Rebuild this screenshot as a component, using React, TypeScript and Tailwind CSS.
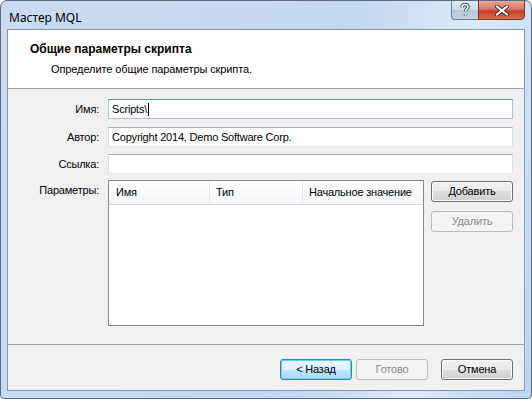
const FONT = { fontFamily: '"Liberation Sans", Arial, sans-serif' }

type BtnKind = "normal" | "default" | "disabled"

function WinButton({ label, kind = "normal", w = "w-[72px]" }: { label: string; kind?: BtnKind; w?: string }) {
  const styles: Record<BtnKind, string> = {
    normal:
      "border-[#707070] text-black bg-[linear-gradient(#f2f2f2,#ebebeb_50%,#dddddd_50%,#cfcfcf)] shadow-[inset_0_0_0_1px_#fbfbfb]",
    default:
      "border-[#3c7fb1] text-black bg-[linear-gradient(#eaf6fd,#d9f0fc_50%,#bee6fd_50%,#a7d9f5)] shadow-[inset_0_0_0_1px_#5fd2f7]",
    disabled: "border-[#b9bdc0] text-[#8a8a8a] bg-[#f4f4f4]",
  }
  return (
    <div className={`${w} h-[21px] flex items-center justify-center rounded-[3px] border text-[11px] tracking-[-0.2px] ${styles[kind]}`}>
      {label}
    </div>
  )
}

function TextBox({ value, focused }: { value?: string; focused?: boolean }) {
  return (
    <div
      className={`w-[405px] h-[20px] flex items-center px-[3px] bg-white border text-[11px] tracking-[-0.2px] text-black ${
        focused
          ? "border-[#a4c6e8] border-t-[#5d95c8]"
          : "border-[#dbdfe6] border-t-[#abadb3] border-b-[#e3e9ef]"
      }`}
    >
      <span>{value}</span>
      {focused && <span className="w-px h-[13px] bg-black ml-px" />}
    </div>
  )
}

function CloseGlyph() {
  return (
    <svg width="14" height="11" viewBox="0 0 14 11">
      <path d="M2 1.5 L12 9.5 M12 1.5 L2 9.5" stroke="#4a2a24" strokeWidth="4" strokeLinecap="square" />
      <path d="M2 1.5 L12 9.5 M12 1.5 L2 9.5" stroke="#ffffff" strokeWidth="2" strokeLinecap="square" />
    </svg>
  )
}

function HelpGlyph() {
  return (
    <svg width="10" height="14" viewBox="0 0 10 14">
      <path
        d="M2 4.5 C2 2.3 3.3 1.5 5 1.5 C6.8 1.5 8 2.5 8 4 C8 5.6 5.5 6.2 5.5 8.5 M5.5 11 L5.5 12.5"
        fill="none"
        stroke="#3e4a58"
        strokeWidth="3.4"
      />
      <path
        d="M2 4.5 C2 2.3 3.3 1.5 5 1.5 C6.8 1.5 8 2.5 8 4 C8 5.6 5.5 6.2 5.5 8.5 M5.5 11 L5.5 12.5"
        fill="none"
        stroke="#ffffff"
        strokeWidth="1.6"
      />
    </svg>
  )
}

export default function App() {
  return (
    <div style={FONT} className="w-[532px] h-[399px] bg-white">
      <div className="w-full h-full flex flex-col rounded-t-[7px] rounded-b-[4px] border border-[#5b6a7d] bg-[linear-gradient(100deg,#c9dcf1_0%,#c2d8f0_60%,#dcebfa_80%,#bad5f1_100%)] overflow-hidden">
        {/* title bar */}
        <div className="h-[28px] flex items-start shrink-0">
          <div className="pl-[8px] pt-[8px] text-[12px] text-black" style={{ fontFamily: '"Noto Sans", "Liberation Sans", sans-serif' }}>
            Мастер MQL
          </div>
          <div className="ml-auto mr-[6px] flex -mt-px">
            <div className="w-[27px] h-[20px] flex items-center justify-center rounded-bl-[4px] border border-[#6b7a8c] border-r-0 bg-[linear-gradient(#e3ecf6,#cfdbe8_50%,#b6c6d8_50%,#c4d4e6)]">
              <HelpGlyph />
            </div>
            <div className="w-[47px] h-[20px] flex items-center justify-center rounded-br-[4px] border border-[#6e3a30] bg-[linear-gradient(#e8a593,#d77a64_45%,#c43c22_55%,#d96d4f)]">
              <CloseGlyph />
            </div>
          </div>
        </div>

        {/* client area */}
        <div className="mx-[6px] mb-[7px] flex-1 flex flex-col border border-[#8497ab] bg-[#f0f0f0]">
          {/* header */}
          <div className="h-[59px] bg-white border-b border-[#a0a0a0] shrink-0">
            <div className="pl-[22px] pt-[10px] text-[12px] font-bold text-black">Общие параметры скрипта</div>
            <div className="pl-[43px] pt-[3px] text-[11px] tracking-[-0.1px] text-black">Определите общие параметры скрипта.</div>
          </div>

          {/* form */}
          <div className="flex flex-col pt-[10px] text-[11px] tracking-[-0.2px] text-black">
            <div className="flex items-center">
              <div className="w-[92px] text-right pr-px">Имя:</div>
              <div className="ml-[8px]">
                <TextBox value="Scripts\" focused />
              </div>
            </div>
            <div className="flex items-center mt-[8px]">
              <div className="w-[92px] text-right pr-px">Автор:</div>
              <div className="ml-[8px]">
                <TextBox value="Copyright 2014, Demo Software Corp." />
              </div>
            </div>
            <div className="flex items-center mt-[7px]">
              <div className="w-[92px] text-right pr-px">Ссылка:</div>
              <div className="ml-[8px]">
                <TextBox />
              </div>
            </div>
            <div className="flex items-start mt-[6px]">
              <div className="w-[92px] text-right pr-px pt-[2px]">Параметры:</div>
              <div className="ml-[8px] w-[316px] h-[146px] border border-[#828790] bg-white flex flex-col">
                <div className="h-[24px] flex border-b border-[#d5d5d5] bg-[linear-gradient(#ffffff,#f4f5f7)]">
                  <div className="w-[101px] flex items-center pl-[7px] border-r border-[#e3e8ee]">Имя</div>
                  <div className="w-[93px] flex items-center pl-[6px] border-r border-[#e3e8ee]">Тип</div>
                  <div className="flex-1 flex items-center pl-[6px]">Начальное значение</div>
                </div>
              </div>
              <div className="ml-[7px] flex flex-col gap-[9px] pt-px">
                <WinButton label="Добавить" w="w-[82px]" />
                <WinButton label="Удалить" kind="disabled" w="w-[82px]" />
              </div>
            </div>
          </div>

          {/* footer */}
          <div className="mt-auto h-[46px] border-t border-[#a0a0a0] flex items-start pt-[14px] pl-[272px] shrink-0">
            <WinButton label="< Назад" kind="default" />
            <div className="ml-[4px]">
              <WinButton label="Готово" kind="disabled" />
            </div>
            <div className="ml-[13px]">
              <WinButton label="Отмена" />
            </div>
          </div>
        </div>
      </div>
    </div>
  )
}
